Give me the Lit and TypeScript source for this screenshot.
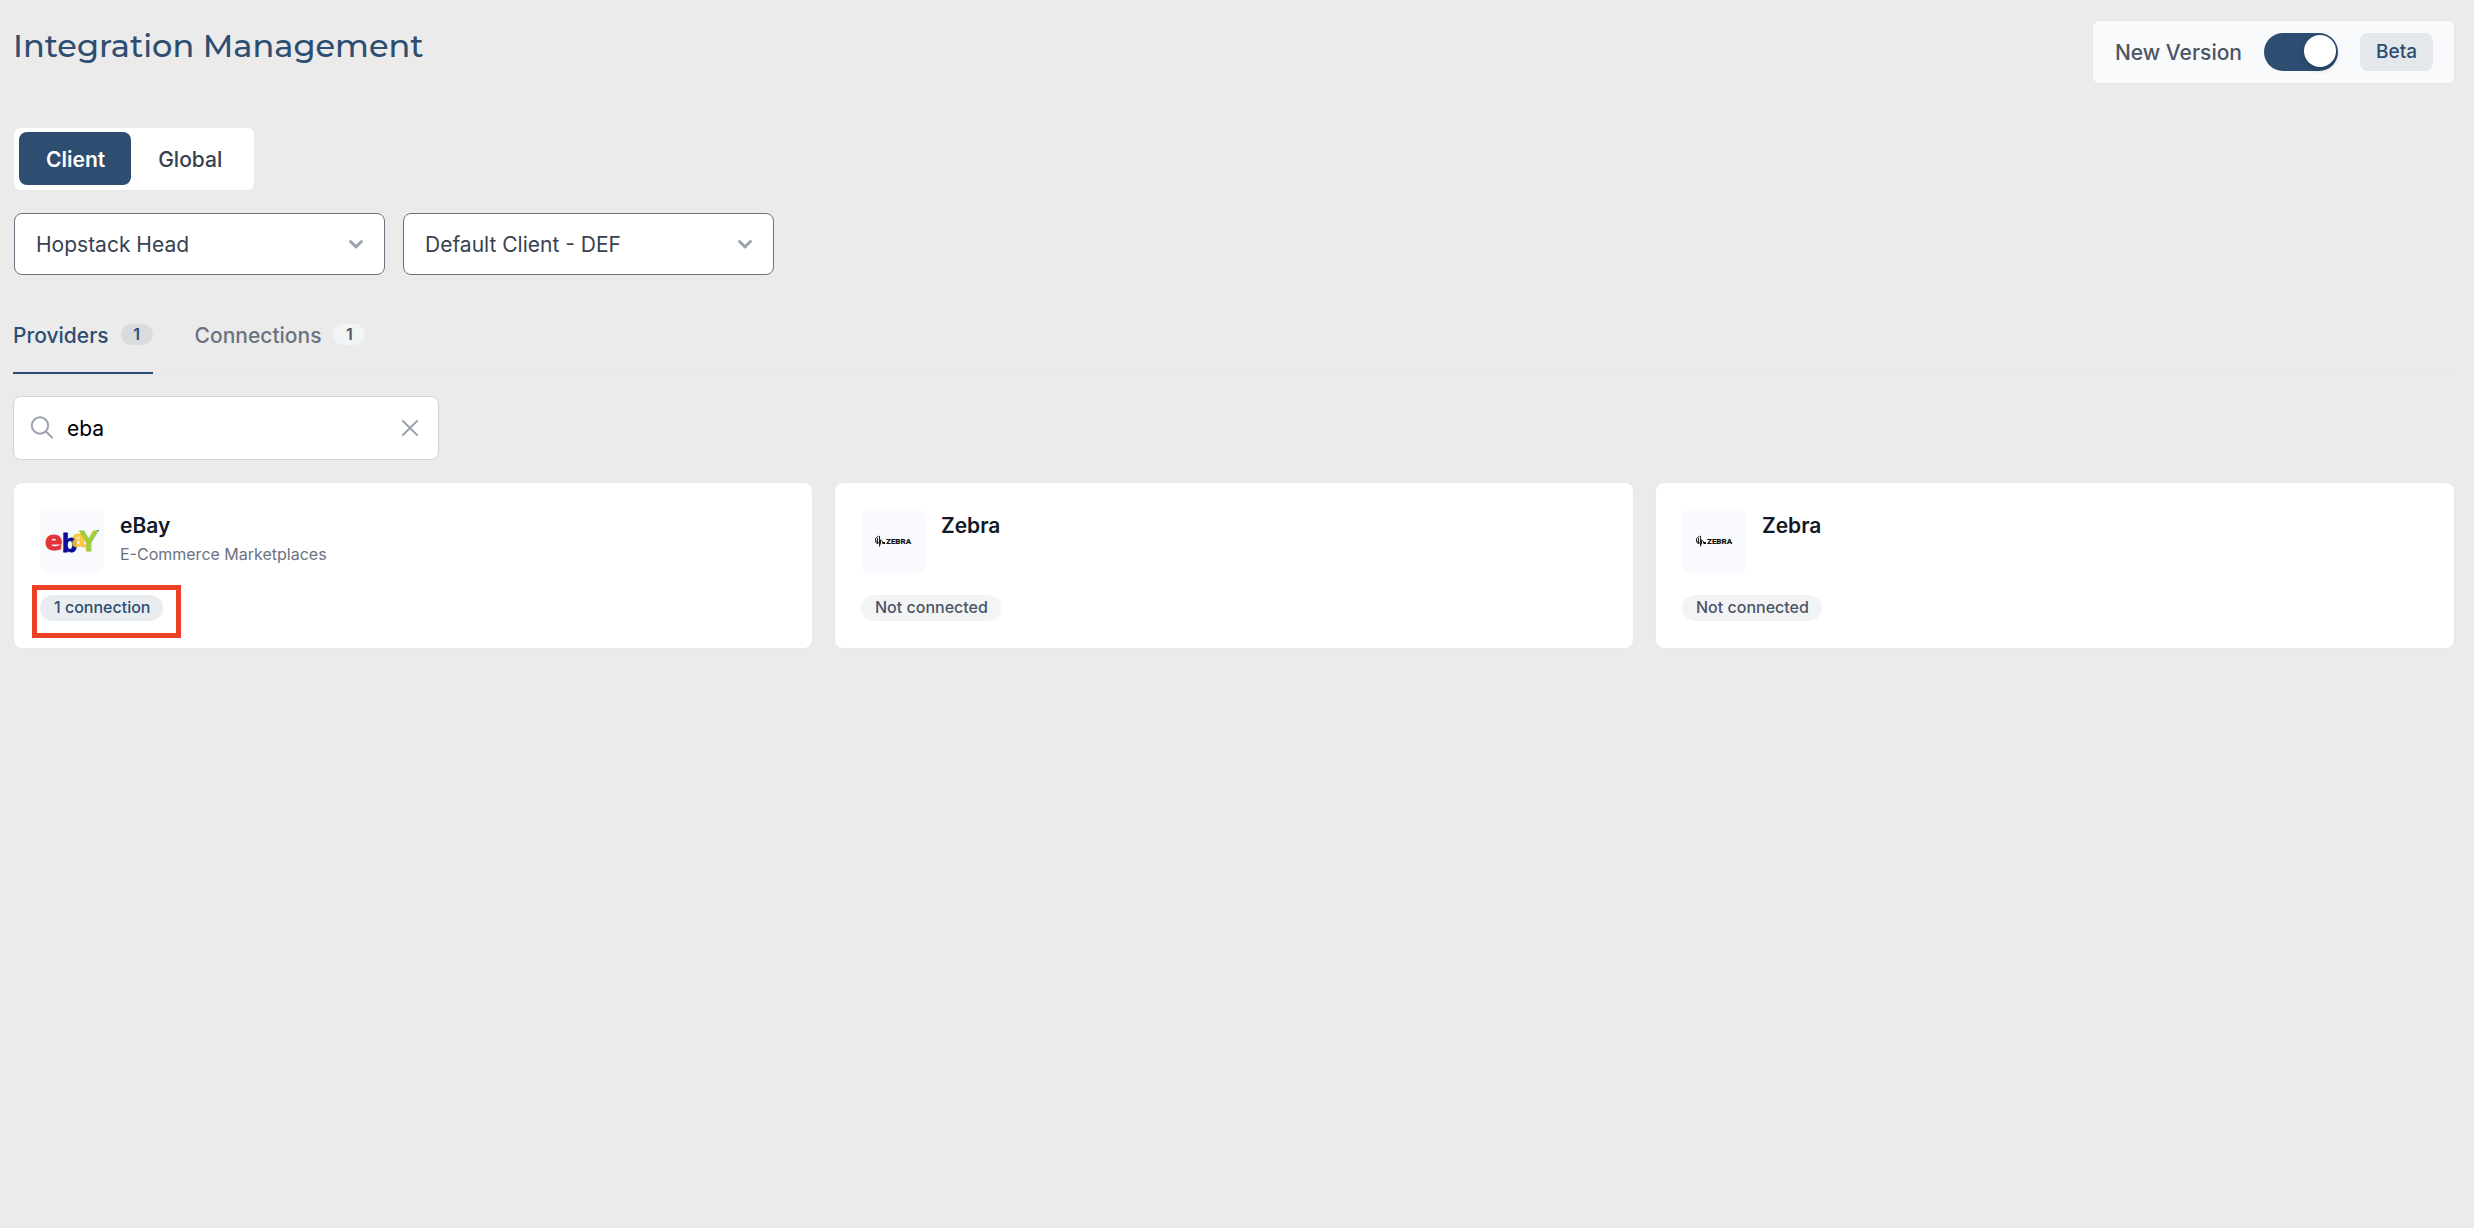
import { LitElement, html, css, svg, nothing } from "lit";
import { customElement, property, state } from "lit/decorators.js";
import { classMap } from "lit/directives/class-map.js";

type Brand = "ebay" | "zebra";

interface Provider {
  name: string;
  category?: string;
  brand: Brand;
  connections: number;
  highlighted?: boolean;
}

const PROVIDERS: Provider[] = [
  { name: "eBay", category: "E-Commerce Marketplaces", brand: "ebay", connections: 1, highlighted: true },
  { name: "Zebra", brand: "zebra", connections: 0 },
  { name: "Zebra", brand: "zebra", connections: 0 },
];

const ebayLogo = svg`
  <g font-family="Liberation Sans, sans-serif" font-weight="700">
    <text x="5" y="41" font-size="26" font-family="DejaVu Sans, sans-serif" fill="#e53238" stroke="#e53238" stroke-width="1">e</text>
    <text x="22" y="43" font-size="25" fill="#0a0a96" stroke="#0a0a96" stroke-width="1">b</text>
    <text x="32" y="38" font-size="24" fill="#fbc531" stroke="#fbc531" stroke-width="1" opacity="0.9">a</text>
    <text x="39" y="42" font-size="29" fill="#a4cb39" stroke="#a4cb39" stroke-width="1">Y</text>
  </g>
  <path d="M57 21.500h2" stroke="#777" stroke-width="1"/>`;

const zebraLogo = svg`
  <g fill="none" stroke="#222" stroke-width="1">
    <path d="M17.500 27l-3 2.500v3l1 2"/>
    <path d="M18.500 27v10.500M16.500 29v6"/>
    <path d="M19.500 30.500v5M20 31.500l1.500 1v2"/>
    <path d="M14 31l5 4"/>
  </g>
  <rect x="22" y="33" width="2" height="2" fill="#111"/>
  <text x="25" y="35" font-family="Roboto, sans-serif" font-weight="900" font-size="8" fill="#111">ZEBRA</text>`;

@customElement("provider-card")
export class ProviderCard extends LitElement {
  @property({ attribute: false }) provider!: Provider;

  static styles = css`
    :host {
      display: block;
    }
    .card {
      box-sizing: border-box;
      height: 100%;
      padding: 26px 26px 27px;
      background: #fff;
      border-radius: 8px;
      box-shadow: 0 0 0 1px #e5e7eb;
    }
    .head {
      display: flex;
      gap: 16px;
    }
    .logo {
      flex: none;
      width: 64px;
      height: 64px;
      border-radius: 8px;
      background: #f8fafd;
    }
    .name {
      margin: 0;
      padding-top: 2px;
      font-size: 21px;
      line-height: 30px;
      font-weight: 600;
      color: #111827;
    }
    .category {
      margin: 0;
      font-size: 16px;
      line-height: 26px;
      color: #6b7280;
    }
    .foot {
      display: flex;
      margin-top: 22px;
    }
    .status {
      position: relative;
      padding: 0 13px 2px 14px;
      border-radius: 13px;
      font-size: 16px;
      line-height: 24px;
      font-weight: 500;
      color: #4b5563;
      background: #f3f4f6;
    }
    .connected {
      color: #2d4d71;
      background: #e9edf0;
    }
    .marker {
      position: absolute;
      inset: -10px -18px -17px -8px;
      border: 5px solid #ed4025;
      pointer-events: none;
    }
  `;

  render() {
    const { name, category, brand, connections, highlighted } = this.provider;
    const connected = connections > 0;
    return html`
      <article class="card">
        <div class="head">
          <svg class="logo" viewBox="0 0 64 64" aria-hidden="true">
            ${brand === "ebay" ? ebayLogo : zebraLogo}
          </svg>
          <div>
            <h2 class="name">${name}</h2>
            ${category ? html`<p class="category">${category}</p>` : nothing}
          </div>
        </div>
        <div class="foot">
          <span class=${classMap({ status: true, connected })}>
            ${connected ? `${connections} connection` : "Not connected"}
            ${highlighted ? html`<span class="marker"></span>` : nothing}
          </span>
        </div>
      </article>
    `;
  }
}

@customElement("app-root")
export class AppRoot extends LitElement {
  @state() private scope = "Client";
  @state() private tab = "Providers";
  @state() private query = "eba";

  static styles = css`
    :host {
      display: block;
      box-sizing: border-box;
      min-height: 100vh;
      padding: 21px 20px 21px 13px;
      background: #ebebeb;
      font-family: Inter, "Liberation Sans", sans-serif;
      font-size: 21px;
      line-height: 30px;
      color: #374151;
    }
    button,
    select,
    input {
      margin: 0;
      font: inherit;
      color: inherit;
    }
    button {
      padding: 0;
      border: 0;
      background: none;
      cursor: pointer;
    }
    .top {
      display: flex;
      justify-content: space-between;
      align-items: flex-start;
    }
    .title {
      margin: 0;
      font-family: Montserrat, Inter, sans-serif;
      font-size: 32px;
      line-height: 50px;
      font-weight: 500;
      color: #2d4d71;
    }
    .version {
      display: flex;
      align-items: center;
      gap: 22px;
      padding: 12px 21px 12px 22px;
      border-radius: 6px;
      background: #f9fafc;
      box-shadow: 0 0 0 1px #e5e7eb;
      font-weight: 500;
      color: #4b5563;
    }
    .version label {
      display: flex;
      align-items: center;
      gap: 22px;
    }
    .label {
      padding-top: 2px;
    }
    .switch {
      appearance: none;
      display: flex;
      justify-content: flex-end;
      box-sizing: border-box;
      width: 74px;
      height: 38px;
      margin: 0;
      padding: 2px;
      border-radius: 19px;
      background: #2d4d71;
      cursor: pointer;
    }
    .switch:not(:checked) {
      justify-content: flex-start;
      background: #9ca3af;
    }
    .switch::before {
      content: "";
      width: 32px;
      height: 32px;
      border-radius: 50%;
      background: #fff;
      box-shadow: 0 3px 6px rgba(0, 0, 0, 0.2);
    }
    .beta {
      padding: 0 16px;
      border-radius: 8px;
      font-size: 19px;
      line-height: 38px;
      color: #2d4d71;
      background: #e4e7ec;
    }
    .scopes {
      display: flex;
      width: fit-content;
      margin: 45px 0 0 1px;
      padding: 4px 6px 5px 5px;
      border-radius: 6px;
      background: #fff;
      box-shadow: 0 0 0 1px #e8e9eb;
    }
    .scope {
      height: 53px;
      padding: 2px 26px 0 27px;
      border-radius: 8px;
      font-weight: 500;
    }
    .scope.active {
      font-weight: 600;
      color: #fff;
      background: #2d4d71;
    }
    .filters {
      display: flex;
      gap: 18px;
      margin: 23px 0 0 1px;
    }
    .picker {
      display: grid;
      align-items: center;
      width: 371px;
    }
    .picker select,
    .picker svg {
      grid-area: 1 / 1;
    }
    .picker select {
      appearance: none;
      box-sizing: border-box;
      width: 100%;
      height: 62px;
      padding: 2px 50px 0 21px;
      border: 1px solid #6b7280;
      border-radius: 8px;
      background: #fff;
    }
    .picker svg {
      justify-self: end;
      margin-right: 21px;
      pointer-events: none;
    }
    .tabs {
      display: flex;
      gap: 42px;
      margin-top: 44px;
      border-bottom: 1px solid #e5e7eb;
    }
    .tab {
      display: flex;
      align-items: flex-start;
      gap: 12px;
      padding: 2px 0 21px;
      border-bottom: 2px solid transparent;
      font-weight: 500;
      color: #6b7280;
    }
    .tab.active {
      color: #2d4d71;
      border-color: #2d4d71;
    }
    .count {
      margin-top: 3px;
      width: 32px;
      border-radius: 11px;
      font-size: 16px;
      line-height: 21px;
      font-weight: 600;
      color: #4b5563;
      background: #f3f4f6;
    }
    .active .count {
      color: #2d4d71;
      background: #d8dcdf;
    }
    .search {
      display: flex;
      align-items: center;
      box-sizing: border-box;
      width: 426px;
      height: 64px;
      margin-top: 21px;
      padding: 0 19px 0 16px;
      border: 1px solid #d1d5db;
      border-radius: 8px;
      background: #fff;
    }
    .search label,
    .search button {
      display: flex;
    }
    .search input {
      flex: 1;
      min-width: 0;
      padding: 2px 13px 0;
      border: 0;
      outline: 0;
      background: none;
      color: #000;
    }
    .cards {
      display: grid;
      grid-template-columns: repeat(3, 1fr);
      gap: 23px;
      margin: 23px 0 0 1px;
    }
  `;

  private chevron() {
    return html`<svg width="16" height="16" viewBox="0 0 16 16" fill="none" stroke="#9ca3af" stroke-width="3" stroke-linecap="round" stroke-linejoin="round" aria-hidden="true">
      <path d="M2.500 5.500L8 10.800l5.500-5.300" />
    </svg>`;
  }

  render() {
    return html`
      <header class="top">
        <h1 class="title">Integration Management</h1>
        <div class="version">
          <label><span class="label">New Version</span><input class="switch" type="checkbox" role="switch" checked /></label>
          <span class="beta">Beta</span>
        </div>
      </header>

      <div class="scopes">
        ${["Client", "Global"].map(
          (name) => html`<button
            class=${classMap({ scope: true, active: this.scope === name })}
            @click=${() => (this.scope = name)}
          >${name}</button>`
        )}
      </div>

      <div class="filters">
        <div class="picker">
          <select aria-label="Warehouse"><option>Hopstack Head</option></select>
          ${this.chevron()}
        </div>
        <div class="picker">
          <select aria-label="Client"><option>Default Client - DEF</option></select>
          ${this.chevron()}
        </div>
      </div>

      <nav class="tabs">
        ${["Providers", "Connections"].map(
          (name) => html`<button
            class=${classMap({ tab: true, active: this.tab === name })}
            @click=${() => (this.tab = name)}
          >${name}<span class="count">1</span></button>`
        )}
      </nav>

      <div class="search">
        <label for="search" aria-label="Search providers">
          <svg width="24" height="24" viewBox="0 0 24 24" fill="none" stroke="#9ca3af" stroke-width="2" stroke-linecap="round" aria-hidden="true">
            <circle cx="10" cy="9.500" r="8.200" />
            <path d="M16 15.500l6 6" />
          </svg>
        </label>
        <input
          id="search"
          type="text"
          .value=${this.query}
          @input=${(e: Event) => (this.query = (e.target as HTMLInputElement).value)}
        />
        <button aria-label="Clear search" @click=${() => (this.query = "")}>
          <svg width="18" height="18" viewBox="0 0 18 18" fill="none" stroke="#9ca3af" stroke-width="2" stroke-linecap="round" aria-hidden="true">
            <path d="M2 2l14 14M16 2L2 16" />
          </svg>
        </button>
      </div>

      <main class="cards">
        ${PROVIDERS.map((p) => html`<provider-card .provider=${p}></provider-card>`)}
      </main>
    `;
  }
}
